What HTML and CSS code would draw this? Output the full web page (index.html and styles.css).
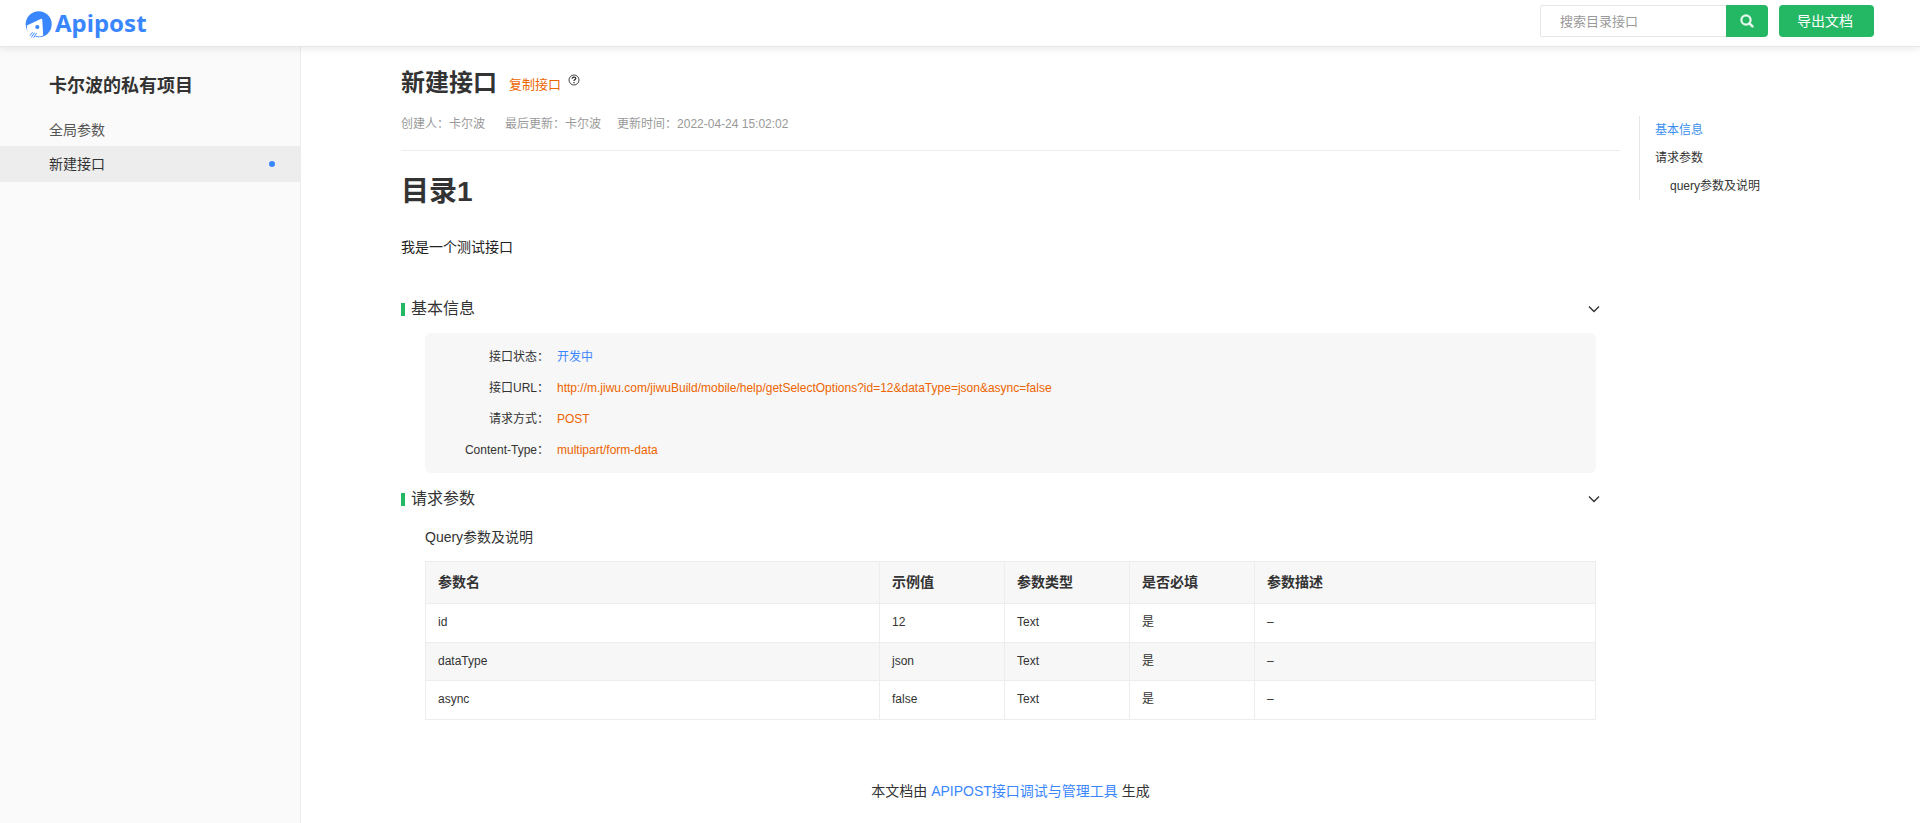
FILE: index.html
```html
<!DOCTYPE html>
<html lang="zh-CN">
<head>
<meta charset="utf-8">
<title>Apipost</title>
<link rel="stylesheet" href="styles.css">
</head>
<body>
<header class="topbar">
  <a class="logo" href="#">
    <svg class="logo-mark" viewBox="0 0 27 31" aria-hidden="true">
      <circle cx="13.7" cy="16.300" r="13" fill="#3a86ff"/>
      <path d="M1.800 17.400L15.700 10.900Q17.200 10.400 17.300 12L18.200 27.500Q14.500 29 11 28L9 31H3L3.500 25.500Q1.700 22.500 1.800 17.400Z" fill="#fff"/>
      <circle cx="12.300" cy="19" r="2.100" fill="#3a86ff"/>
      <path d="M7.600 24.300L5 27.600M9.600 24.600L6.300 29.400M11.600 25.200L8.600 29.800" stroke="#3a86ff" stroke-width="1" fill="none"/>
    </svg>
    <span>Apipost</span>
  </a>
  <form class="search">
    <input class="search-input" type="text" placeholder="搜索目录接口" aria-label="搜索目录接口">
    <button class="search-button" type="button" aria-label="搜索">
      <svg width="14" height="14" viewBox="0 0 14 14" aria-hidden="true"><circle cx="6" cy="6" r="4.600" fill="none" stroke="#e9f8ef" stroke-width="2.200"/><path d="M9.400 9.400L12.400 12.400" stroke="#e9f8ef" stroke-width="2.600" stroke-linecap="round"/></svg>
    </button>
  </form>
  <button class="export" type="button">导出文档</button>
</header>
<div class="page">
  <nav class="sidebar">
    <h2 class="project">卡尔波的私有项目</h2>
    <a class="nav-item" href="#">全局参数</a>
    <a class="nav-item active" href="#">新建接口<span class="dot"></span></a>
  </nav>
  <main class="content">
    <div class="title-row">
      <h1 class="title">新建接口</h1>
      <button class="copy" type="button">复制接口</button>
      <svg class="help" width="12" height="12" viewBox="0 0 12 12" aria-hidden="true"><circle cx="6" cy="6" r="5" fill="none" stroke="#333" stroke-width="0.900"/><path d="M4.200 4.700Q4.200 3.200 6 3.200Q7.800 3.200 7.800 4.500Q7.800 5.300 6.700 5.800Q6 6.200 6 7.100M6 8V9.200" fill="none" stroke="#333" stroke-width="1.300"/></svg>
    </div>
    <div class="meta"><span class="creator">创建人：卡尔波</span><span class="updater">最后更新：卡尔波</span><span>更新时间：2022-04-24 15:02:02</span></div>
    <h1 class="doc-title">目录1</h1>
    <p class="doc-text">我是一个测试接口</p>
    <section>
      <div class="section-head"><h2 class="section-title">基本信息</h2>
        <button class="toggle" type="button" aria-label="收起基本信息"><svg width="12" height="8" viewBox="0 0 12 8" aria-hidden="true"><path d="M1 1.500L6 6.500L11 1.500" fill="none" stroke="#333" stroke-width="1.400"/></svg></button></div>
      <dl class="info">
        <dt>接口状态：</dt><dd class="status">开发中</dd>
        <dt>接口URL：</dt><dd>http://m.jiwu.com/jiwuBuild/mobile/help/getSelectOptions?id=12&amp;dataType=json&amp;async=false</dd>
        <dt>请求方式：</dt><dd>POST</dd>
        <dt>Content-Type：</dt><dd>multipart/form-data</dd>
      </dl>
    </section>
    <section>
      <div class="section-head"><h2 class="section-title">请求参数</h2>
        <button class="toggle" type="button" aria-label="收起请求参数"><svg width="12" height="8" viewBox="0 0 12 8" aria-hidden="true"><path d="M1 1.500L6 6.500L11 1.500" fill="none" stroke="#333" stroke-width="1.400"/></svg></button></div>
      <div class="params">
        <h3 class="subhead">Query参数及说明</h3>
        <table class="param-table">
          <colgroup><col><col class="col-mid"><col class="col-mid"><col class="col-mid"><col class="col-desc"></colgroup>
          <thead><tr><th>参数名</th><th>示例值</th><th>参数类型</th><th>是否必填</th><th>参数描述</th></tr></thead>
          <tbody>
            <tr><td>id</td><td>12</td><td>Text</td><td>是</td><td>–</td></tr>
            <tr><td>dataType</td><td>json</td><td>Text</td><td>是</td><td>–</td></tr>
            <tr><td>async</td><td>false</td><td>Text</td><td>是</td><td>–</td></tr>
          </tbody>
        </table>
      </div>
    </section>
    <footer class="footer">本文档由 <a href="#">APIPOST接口调试与管理工具</a> 生成</footer>
  </main>
  <aside class="toc-column">
    <nav class="toc">
      <a class="current" href="#">基本信息</a>
      <a href="#">请求参数</a>
      <a class="nested" href="#">query参数及说明</a>
    </nav>
  </aside>
</div>
</body>
</html>
```
FILE: styles.css
```css
* { box-sizing: border-box; }
body {
  margin: 0;
  min-height: 100vh;
  display: flex;
  flex-direction: column;
  background: #fff;
  color: #333;
  font: 14px/20px "Liberation Sans", "Noto Sans CJK SC", sans-serif;
}
h1, h2, h3, p, dl, dd { margin: 0; }
a { color: inherit; text-decoration: none; }
button { border: 0; padding: 0; background: none; font: inherit; cursor: pointer; }

.topbar {
  position: relative;
  display: flex;
  align-items: center;
  height: 47px;
  padding: 0 46px 4px 25px;
  background: #fff;
  border-bottom: 1px solid #e6e6e6;
  box-shadow: 0 2px 8px rgba(0, 0, 0, 0.08);
}
.logo {
  display: flex;
  align-items: center;
  gap: 3px;
  margin-right: auto;
  padding-top: 4px;
  color: #3a86ff;
  font: 700 24px/28px "Noto Sans", "Open Sans", sans-serif;
}
.logo-mark { width: 27px; height: 31px; }
.search { display: flex; margin-right: 11px; }
.search-input {
  width: 186px;
  height: 32px;
  padding: 0 19px;
  border: 1px solid #e6e6e6;
  border-right: 0;
  border-radius: 2px 0 0 2px;
  font: inherit;
  font-size: 13px;
  outline: 0;
}
.search-input::placeholder { color: #999; }
.search-button {
  display: flex;
  align-items: center;
  justify-content: center;
  width: 42px;
  height: 32px;
  border-radius: 0 4px 4px 0;
  background: #25b864;
}
.export {
  width: 95px;
  height: 32px;
  padding: 0 3px 0 0;
  border-radius: 4px;
  background: #25b864;
  color: #fff;
}

.page { display: flex; flex: 1; }
.sidebar {
  flex: 0 0 301px;
  padding-top: 27px;
  background: #fafafa;
  border-right: 1px solid #ededed;
}
.project { padding-left: 49px; margin-bottom: 16px; font-size: 18px; line-height: 24px; }
.nav-item {
  display: flex;
  align-items: center;
  height: 32px;
  padding: 0 25px 0 49px;
  color: #555;
}
.nav-item.active { height: 36px; background: #ededed; color: #333; }
.dot { width: 6px; height: 6px; margin-left: auto; border-radius: 50%; background: #3a86ff; }

.content { flex: 1; padding: 20px 0 0 100px; }
.title-row { display: flex; align-items: center; height: 32px; }
.title { font-size: 24px; line-height: 32px; }
.copy { margin: 4px 7px 0 12px; color: #ed6400; font-size: 13px; }
.help { margin-bottom: 6px; }
.meta {
  display: flex;
  padding: 15px 0 16px;
  border-bottom: 1px solid #ededed;
  color: #999;
  font-size: 12px;
}
.creator { margin-right: 20px; }
.updater { margin-right: 16px; }
.doc-title { padding: 23px 0 19px; font-size: 28px; line-height: 36px; }
.doc-text { padding: 8px 0 42px; color: #222; }

.section-head {
  display: flex;
  align-items: center;
  justify-content: space-between;
  height: 20px;
  padding-right: 20px;
}
.section-title { display: flex; align-items: center; gap: 6px; font-size: 16px; font-weight: 400; }
.section-title::before { content: ""; width: 4px; height: 13px; background: #25b864; }
.toggle { display: flex; }
.info {
  display: grid;
  grid-template-columns: 124px 1fr;
  column-gap: 8px;
  margin: 14px 24px 16px;
  padding: 9px 0 7px;
  border-radius: 6px;
  background: #f7f7f7;
  font-size: 12px;
  line-height: 31px;
}
.info dt { text-align: right; }
.info dd { color: #ed6400; }
.info .status { color: #3a86ff; }
.params { margin: 0 24px; }
.subhead { padding: 18px 0 14px; font-size: 14px; font-weight: 400; }
.param-table { width: 100%; table-layout: fixed; border-collapse: collapse; }
.param-table th, .param-table td {
  height: 39px;
  padding: 0 12px 2px;
  border: 1px solid #ededed;
  text-align: left;
  font-size: 12px;
}
.param-table th { height: 42px; background: #f7f7f7; font-size: 14px; }
.param-table tr:nth-child(even) td { height: 38px; background: #f7f7f7; }
.col-mid { width: 125px; }
.col-desc { width: 341px; }
.footer { padding: 61px 0 22px; text-align: center; }
.footer a { color: #3a86ff; }

.toc-column { flex: 0 0 300px; padding: 69px 0 0 19px; }
.toc {
  display: flex;
  flex-direction: column;
  border-left: 1px solid #e6e6e6;
  padding-left: 15px;
  font-size: 12px;
  line-height: 28px;
}
.toc .current { color: #3a8ff0; }
.toc .nested { padding-left: 15px; }
```
